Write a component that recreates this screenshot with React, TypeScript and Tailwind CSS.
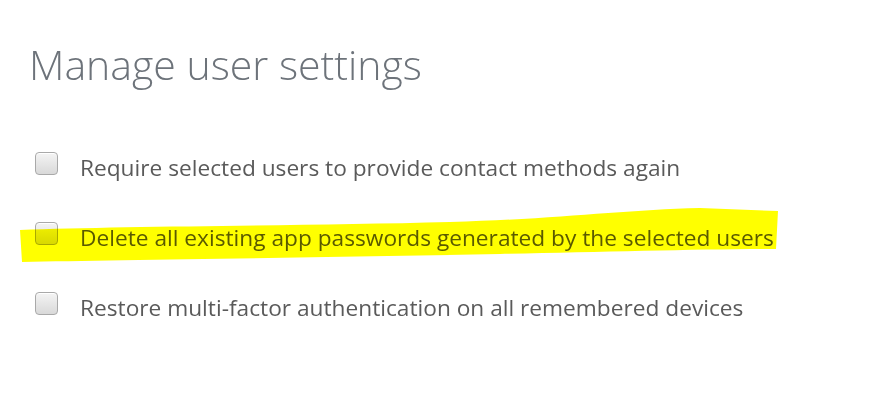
import React from "react"

const options = [
  "Require selected users to provide contact methods again",
  "Delete all existing app passwords generated by the selected users",
  "Restore multi-factor authentication on all remembered devices",
]

function Box() {
  return (
    <span className="mt-[1px] block h-[23px] w-[23px] shrink-0 rounded-[4px] border border-[#a9a9a9] bg-gradient-to-b from-[#f4f4f4] to-[#d9d9d9] shadow-[inset_0_1px_0_#fff]" />
  )
}

export default function App() {
  return (
    <div className="relative h-[403px] w-[869px] overflow-hidden bg-white" style={{ fontFamily: '"Open Sans", "Noto Sans", sans-serif' }}>
      <div className="pl-[29px] pt-[38px]">
        <div className="text-[41px] font-light leading-[52px] text-[#6d737a]">Manage user settings</div>
        <div className="mt-[61px] flex flex-col gap-[40px] pl-[6px]">
          {options.map((o, i) => (
            <label key={i} className="flex items-start gap-[22px]">
              <Box />
              <span className="mt-[2px] -mb-[2px] text-[22.7px] leading-[30px] text-[#5a5a5a]">{o}</span>
            </label>
          ))}
        </div>
      </div>
      {/* marker highlight drawn over the second row */}
      <svg className="pointer-events-none absolute left-0 top-0 mix-blend-multiply" width="869" height="403">
        <path
          d="M20,230 C120,226 300,226 450,222 C560,219 620,210 700,208 L778,211 L776,249 C700,249 600,252 500,254 C300,258 120,260 22,262 Z"
          fill="#ffff00"
        />
      </svg>
    </div>
  )
}
